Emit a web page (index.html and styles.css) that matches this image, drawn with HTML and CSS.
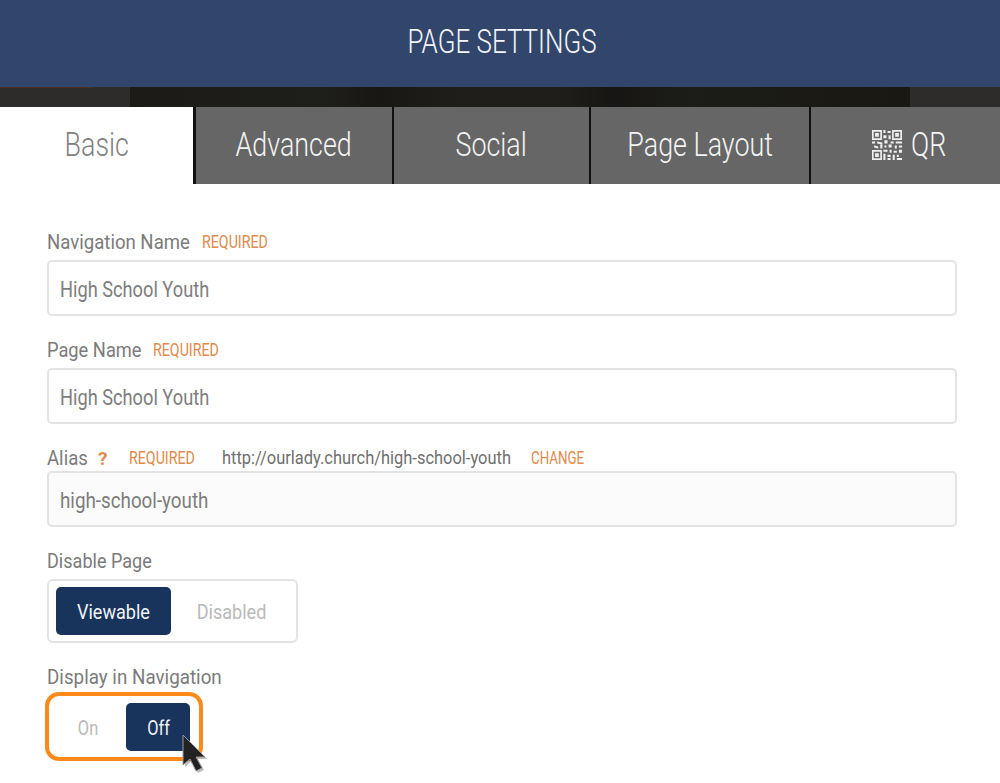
FILE: index.html
```html
<!DOCTYPE html>
<html lang="en">
<head>
<meta charset="utf-8">
<title>Page Settings</title>
<link rel="stylesheet" href="styles.css">
</head>
<body>
<header class="title-bar"><h1 class="title">PAGE SETTINGS</h1></header>
<div class="photo-band"><div class="photo-dark"></div></div>
<nav class="tabs">
  <div class="tab tab-active"><span class="tab-text">Basic</span></div>
  <div class="tab"><span class="tab-text">Advanced</span></div>
  <div class="tab"><span class="tab-text">Social</span></div>
  <div class="tab"><span class="tab-text">Page Layout</span></div>
  <div class="tab tab-qr">
    <svg class="qr" viewBox="0 0 29 29" width="30" height="30" aria-hidden="true">
      <path fill="none" stroke="#f0f0f0" stroke-width="1.6" d="M.8.8h8v8h-8zM20.2.8h8v8h-8zM.8 20.2h8v8h-8z"/>
      <path fill="#f0f0f0" d="M3 3h3.600v3.600H3zM22.400 3H26v3.600h-3.600zM3 22.400h3.600V26H3zM11 0h2v3h-2zM15 1h3v2h-3zM11 5h3v3h-3zM16 5h2v4h-2zM0 11h3v2H0zM5 11l5 1v2l-5-1zM12 10h3v3h-3zM18 11h3v2h-3zM23 11h6v2h-6zM2 15l4 1v2l-4-1zM8 14h2v4H8zM12 15h2v2h-2zM16 14h3v3h-3zM22 15h2v3h-2zM26 15h3v2h-3zM11 19h4v2h-4zM17 19h2v3h-2zM21 20h3v2h-3zM26 19h3v3h-3zM11 23h2v6h-2zM15 24h3v2h-3zM20 24h2v5h-2zM24 24h2v2h-2zM15 27h3v2h-3zM24 27h5v2h-5z"/>
    </svg>
    <span class="tab-text qr-text">QR</span>
  </div>
</nav>
<main class="form">
  <section class="field">
    <div class="label-row"><span class="label label-nav">Navigation Name</span><span class="req">REQUIRED</span></div>
    <div class="input"><span class="input-text">High School Youth</span></div>
  </section>
  <section class="field">
    <div class="label-row"><span class="label label-page">Page Name</span><span class="req">REQUIRED</span></div>
    <div class="input"><span class="input-text">High School Youth</span></div>
  </section>
  <section class="field field-alias">
    <div class="label-row">
      <span class="label label-alias">Alias</span><span class="help">?</span><span class="req req-alias">REQUIRED</span>
      <span class="url">http://ourlady.church/high-school-youth</span><span class="req req-change">CHANGE</span>
    </div>
    <div class="input input-alias"><span class="input-text input-text-alias">high-school-youth</span></div>
  </section>
  <section class="field field-disable">
    <div class="label-row"><span class="label label-disable">Disable Page</span></div>
    <div class="toggle toggle-page">
      <div class="opt opt-on opt-view"><span class="opt-text">Viewable</span></div>
      <div class="opt opt-disabled"><span class="opt-text">Disabled</span></div>
    </div>
  </section>
  <section class="field field-nav">
    <div class="label-row"><span class="label label-display">Display in Navigation</span></div>
    <div class="toggle-nav">
      <div class="opt opt-off-label"><span class="opt-text opt-text-tight">On</span></div>
      <div class="opt opt-on opt-off"><span class="opt-text opt-text-tight">Off</span></div>
      <svg class="cursor" viewBox="0 0 26 42" width="26" height="42" aria-hidden="true">
        <path fill="#000" opacity=".25" d="M3 3l0 30 7-6 6 12 6-3-6-11h9z"/>
        <path fill="#222" stroke="#999" stroke-width="1" d="M1 1l0 30 7-6 6 12 6-3-6-11h9z"/>
      </svg>
    </div>
  </section>
</main>
</body>
</html>
```
FILE: styles.css
```css
* { box-sizing: border-box; }
html, body { margin: 0; padding: 0; }
body {
  width: 1000px;
  height: 783px;
  overflow: hidden;
  background: #fff;
  font-family: "Roboto", "Liberation Sans", sans-serif;
  color: #757575;
}
.title-bar {
  height: 87px;
  background: #32466c;
  display: flex;
  align-items: center;
  justify-content: center;
  padding: 0 0 6px 4px;
}
.title {
  margin: 0;
  font-size: 34px;
  font-weight: 300;
  color: #f4f6f9;
  line-height: 1;
  white-space: nowrap;
  transform: scaleX(.763);
}
.photo-band {
  height: 20px;
  background: linear-gradient(#4a2f22, #4a2f22) 0 0 / 93px 1px no-repeat, #2d2c2a;
  padding: 0 90px 0 130px;
}
.photo-dark {
  height: 100%;
  background: linear-gradient(90deg, #1c1b17 0%, #1e1e1a 25%, #181714 32%, #1f1e1b 42%, #1f1e1b 55%, #171614 62%, #1c1c18 72%, #191813 100%);
}
.tabs {
  height: 77px;
  display: grid;
  grid-template-columns: 193px 196px 194.5px 217.5px 1fr;
  column-gap: 2.5px;
  background: #111;
}
.tab {
  background: #666;
  color: #f4f4f4;
  font-size: 34px;
  font-weight: 300;
  display: flex;
  align-items: center;
  justify-content: center;
  padding-bottom: 4px;
}
.tab-active { background: #fff; color: #808080; }
.tab-text { display: inline-block; white-space: nowrap; transform: scaleX(.79); }
.tab-qr { padding-left: 5px; gap: 9px; }
.qr { margin-top: 3px; }
.qr-text { width: 33px; transform-origin: 0 50%; }
.form { padding: 48px 43px 0 47px; }
.field { margin-bottom: 24px; }
.label-row {
  height: 20px;
  display: flex;
  align-items: center;
  margin-bottom: 8px;
}
.label {
  display: block;
  flex: none;
  white-space: nowrap;
  font-size: 21px;
  color: #7b7b7b;
  transform: scaleX(.885);
  transform-origin: 0 50%;
}
.label-nav { width: 143px; }
.label-page { width: 94px; transform: scaleX(.87); }
.label-alias { width: 40px; }
.label-disable { width: 105px; transform: scaleX(.86); }
.label-display { width: 174px; transform: scaleX(.895); }
.req {
  display: block;
  flex: none;
  width: 66px;
  margin-left: 12px;
  padding-bottom: 1px;
  white-space: nowrap;
  font-size: 18px;
  color: #e08a4b;
  transform: scaleX(.79);
  transform-origin: 0 50%;
}
.req-alias { margin-left: 22px; }
.req-change { width: 53px; margin-left: 20px; transform: scaleX(.74); }
.help { flex: none; width: 9px; margin-left: 11px; font-size: 19px; font-weight: 700; color: #e08a4b; }
.url {
  display: block;
  flex: none;
  width: 289px;
  margin-left: 27px;
  padding-bottom: 1px;
  white-space: nowrap;
  font-size: 19px;
  color: #6f6f6f;
  transform: scaleX(.866);
  transform-origin: 0 50%;
}
.input {
  height: 56px;
  border: 2px solid #e3e3e3;
  border-radius: 5px;
  background: #fff;
  padding: 1px 0 0 11px;
  display: flex;
  align-items: center;
  font-size: 22.5px;
  color: #7d7d7d;
}
.input-text { white-space: nowrap; transform: scaleX(.81); transform-origin: 0 50%; }
.input-text-alias { transform: scaleX(.835); }
.field-alias .label-row { margin-bottom: 3px; }
.input-alias { background: #fbfbfb; }
.toggle {
  width: 251px;
  height: 64px;
  border: 2px solid #e3e3e3;
  border-radius: 6px;
  padding: 6px 7px;
  display: flex;
}
.opt {
  font-size: 21px;
  display: flex;
  align-items: center;
  justify-content: center;
  border-radius: 5px;
  height: 48px;
  padding-top: 1px;
}
.opt-text { white-space: nowrap; transform: scaleX(.86); }
.opt-text-tight { transform: scaleX(.78); }
.opt-on { background: #18335c; color: #f2f4f7; }
.opt-view { width: 115px; }
.opt-disabled { flex: 1; color: #b9b9b9; padding-left: 4px; }
.toggle-nav {
  position: relative;
  width: 158px;
  height: 69px;
  margin-left: -2px;
  margin-top: -3px;
  border: 4px solid #fb8a1b;
  border-radius: 14px;
  padding: 7px 9px 6px 0;
  display: flex;
  justify-content: flex-end;
}
.opt-off-label { width: 77px; color: #b9b9b9; padding-left: 2px; }
.opt-off { width: 64px; padding-left: 2px; }
.cursor { position: absolute; left: 133px; top: 38px; }
```
